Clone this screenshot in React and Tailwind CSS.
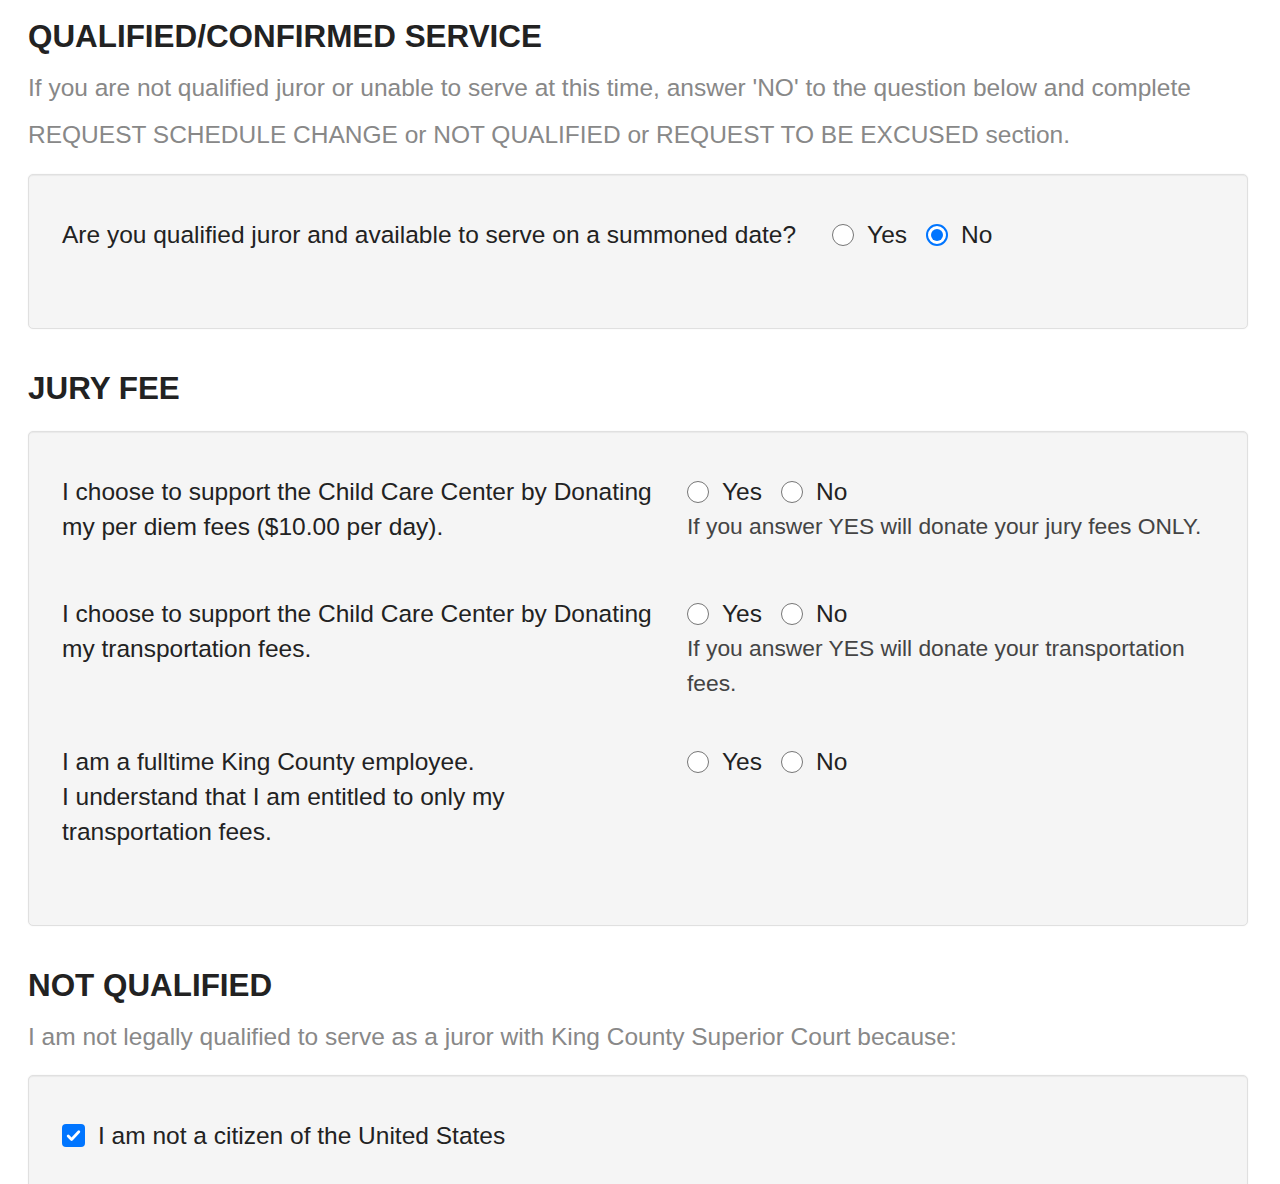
import React from 'react';

const Radio = ({ checked }) => (
  checked ? (
    <span className="w-[22px] h-[22px] rounded-full border-[2px] border-[#0075ff] bg-white flex items-center justify-center shrink-0">
      <span className="w-[12px] h-[12px] rounded-full bg-[#0075ff]" />
    </span>
  ) : (
    <span className="block w-[22px] h-[22px] rounded-full border-[1.5px] border-[#767676] bg-white shrink-0" />
  )
);

const YesNo = ({ value }) => (
  <div className="flex items-center h-[35px]">
    <Radio checked={value === 'yes'} />
    <span className="ml-[13px] text-[#222]">Yes</span>
    <span className="ml-[19px]"><Radio checked={value === 'no'} /></span>
    <span className="ml-[13px] text-[#222]">No</span>
  </div>
);

const Card = ({ children, className = '' }) => (
  <div className={`bg-[#f5f5f5] border border-[#e0e0e0] rounded-[5px] shadow-[inset_0_1px_1px_rgba(0,0,0,0.05),0_0_2px_rgba(0,0,0,0.06)] px-[33px] ${className}`}>
    {children}
  </div>
);

const Heading = ({ children, className = '' }) => (
  <h2 className={`text-[31.4px] leading-[36px] font-bold text-[#222] ${className}`}>{children}</h2>
);

export default function App() {
  return (
    <div className="bg-white min-h-[1184px] overflow-hidden" style={{ fontFamily: '"Liberation Sans", Arial, sans-serif' }}>
      <div className="w-[1220px] ml-[28px] text-[24.5px]">
        {/* Qualified / confirmed service */}
        <Heading className="pt-[19px]">QUALIFIED/CONFIRMED SERVICE</Heading>
        <p className="mt-[9px] leading-[47px] text-[#888]">
          If you are not qualified juror or unable to serve at this time, answer 'NO' to the question below and complete
          <br />
          REQUEST SCHEDULE CHANGE or NOT QUALIFIED or REQUEST TO BE EXCUSED section.
        </p>
        <Card className="mt-[16px] pt-[42px] pb-[76px]">
          <div className="flex items-center leading-[35px] text-[#222]">
            <span>Are you qualified juror and available to serve on a summoned date?</span>
            <span className="ml-[36px]"><YesNo value="no" /></span>
          </div>
        </Card>

        {/* Jury fee */}
        <Heading className="mt-[42px]">JURY FEE</Heading>
        <Card className="mt-[24px] pt-[42px] pb-[76px]">
          <div className="flex leading-[35px] mb-[52px]">
            <div className="w-[625px] text-[#222]">
              I choose to support the Child Care Center by Donating<br />my per diem fees ($10.00 per day).
            </div>
            <div className="flex-1">
              <YesNo />
              <div className="text-[#444] text-[22.8px]">If you answer YES will donate your jury fees ONLY.</div>
            </div>
          </div>
          <div className="flex leading-[35px] mb-[43px]">
            <div className="w-[625px] text-[#222]">
              I choose to support the Child Care Center by Donating<br />my transportation fees.
            </div>
            <div className="flex-1">
              <YesNo />
              <div className="text-[#444] text-[22.8px]">If you answer YES will donate your transportation<br />fees.</div>
            </div>
          </div>
          <div className="flex leading-[35px]">
            <div className="w-[625px] text-[#222]">
              I am a fulltime King County employee.<br />I understand that I am entitled to only my<br />transportation fees.
            </div>
            <div className="flex-1">
              <YesNo />
            </div>
          </div>
        </Card>

        {/* Not qualified */}
        <Heading className="mt-[42px]">NOT QUALIFIED</Heading>
        <p className="mt-[9px] leading-[47px] text-[#888]">
          I am not legally qualified to serve as a juror with King County Superior Court because:
        </p>
        <Card className="mt-[15px] pt-[42px] pb-[76px]">
          <div className="flex items-center leading-[35px] text-[#222]">
            <span className="w-[23px] h-[23px] rounded-[4px] bg-[#0075ff] flex items-center justify-center shrink-0">
              <svg width="17" height="17" viewBox="0 0 16 16" fill="none">
                <path d="M3 8.5l3.2 3.2L13 4.5" stroke="white" strokeWidth="2.6" strokeLinecap="round" strokeLinejoin="round" />
              </svg>
            </span>
            <span className="ml-[13px]">I am not a citizen of the United States</span>
          </div>
        </Card>
      </div>
    </div>
  );
}
